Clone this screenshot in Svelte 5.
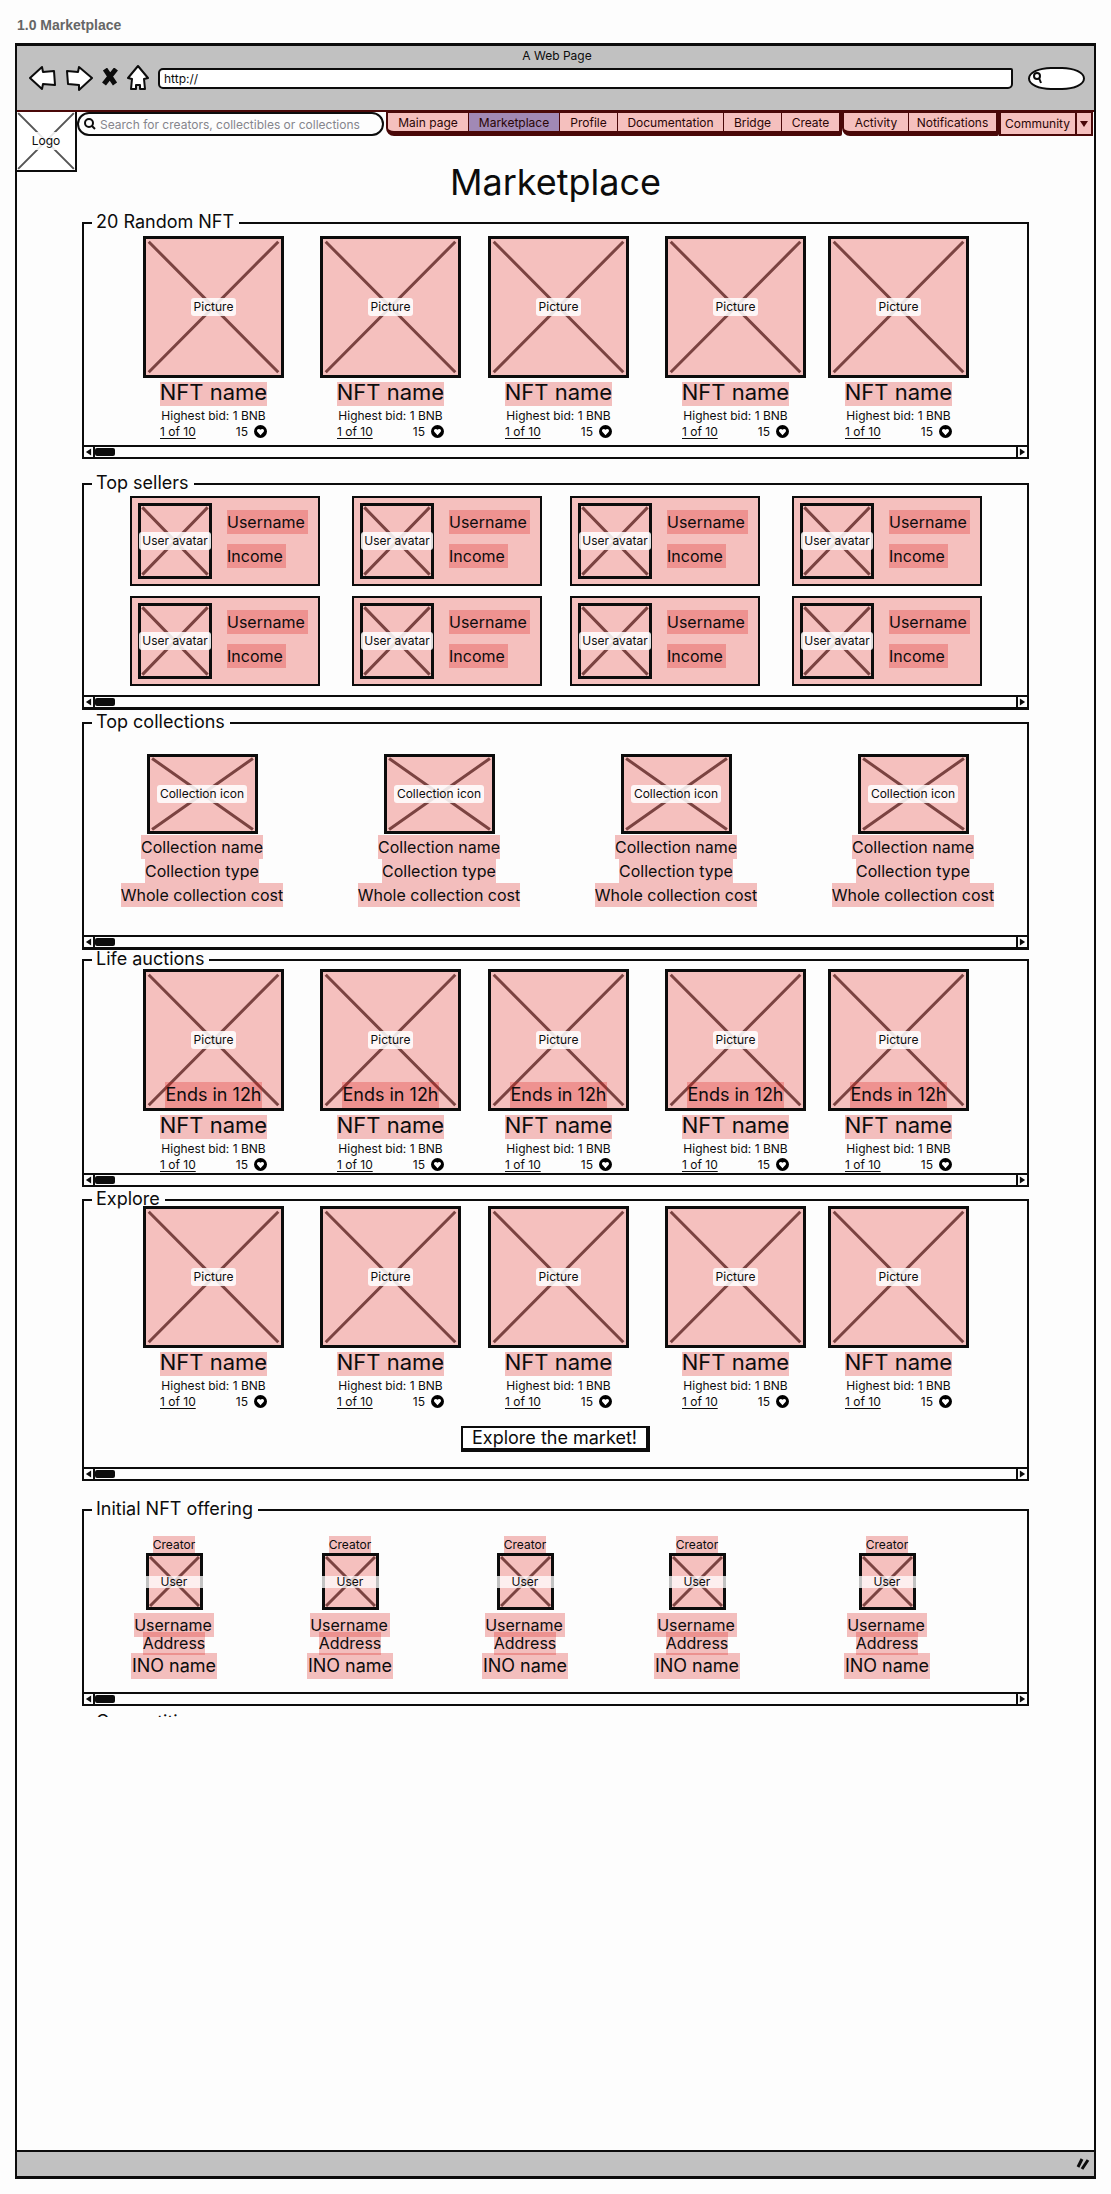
<script>
  const mainLinks = ['Main page', 'Marketplace', 'Profile', 'Documentation', 'Bridge', 'Create'];
  const userLinks = ['Activity', 'Notifications'];
  const five = [1, 2, 3, 4, 5];
  const four = [1, 2, 3, 4];
  const eight = [1, 2, 3, 4, 5, 6, 7, 8];
</script>

{#snippet placeholder(label, kind)}
  <div class="placeholder {kind}">
    <svg viewBox="0 0 100 100" preserveAspectRatio="none" aria-hidden="true">
      <path d="M2 2 98 98M98 2 2 98" vector-effect="non-scaling-stroke" />
    </svg>
    <span>{label}</span>
  </div>
{/snippet}

{#snippet legend(text)}
  <header class="legend"><h2>{text}</h2></header>
{/snippet}

{#snippet scrollbar()}
  <div class="scrollbar">
    <button aria-label="Scroll left"><svg viewBox="0 0 8 8"><path d="M7 0v8L1 4z" /></svg></button>
    <span class="thumb"></span>
    <button class="next" aria-label="Scroll right"><svg viewBox="0 0 8 8"><path d="M1 0v8l6-4z" /></svg></button>
  </div>
{/snippet}

{#snippet nfts(timed)}
  <div class="nfts">
    {#each five as n (n)}
      <article class="nft">
        <div class="cover">
          {@render placeholder('Picture', 'picture')}
          {#if timed}<span class="mark ends">Ends in 12h</span>{/if}
        </div>
        <div class="info">
          <h3 class="mark">NFT name</h3>
          <p>Highest bid: 1 BNB</p>
          <div class="counts">
            <a href="#edition">1 of 10</a>
            <span>15</span>
            <button aria-label="Like">
              <svg viewBox="0 0 13 13">
                <circle cx="6.500" cy="6.500" r="6.500" />
                <path d="M6.500 10.200 3.300 6.700C2 4.800 4.800 2.800 6.500 4.800 8.200 2.800 11 4.800 9.700 6.700z" fill="#fff" />
              </svg>
            </button>
          </div>
        </div>
      </article>
    {/each}
  </div>
{/snippet}

<div class="page">
  <div class="caption">1.0 Marketplace</div>
  <div class="window">
    <div class="chrome">
      <div class="tab-title">A Web Page</div>
      <div class="controls">
        <button aria-label="Back"><svg width="27" height="26" viewBox="0 0 27 26"><path d="M1 13 13 2l1 5 11-1 1 14-12-1-1 5z" /></svg></button>
        <button aria-label="Forward"><svg width="28" height="26" viewBox="0 0 28 26"><path d="M27 13 14 2l-1 5-11-1 1 13 11 1v5z" /></svg></button>
        <button class="stop" aria-label="Stop"><svg width="16" height="20" viewBox="0 0 16 20"><path d="M3 1l10 15M14 1 2 16" /></svg></button>
        <button aria-label="Home"><svg width="22" height="26" viewBox="0 0 22 26"><path d="M11 1 1 13l4 1-1 10h5v-4h4v4h5l-1-10 4-1z" /></svg></button>
        <input class="url" type="text" value="http://" aria-label="Address" />
        <label class="web-search">
          <svg width="10" height="12" viewBox="0 0 10 12"><circle cx="5" cy="4" r="3" /><path d="m7 6 2 5" /></svg>
          <input type="text" aria-label="Web search" />
        </label>
      </div>
    </div>

    <div class="top">
      {@render placeholder('Logo', 'logo')}
      <div class="bar">
        <label class="search">
          <svg width="12" height="12" viewBox="0 0 12 12"><circle cx="5" cy="5" r="4" /><path d="m8 8 3 3" /></svg>
          <input type="text" placeholder="Search for creators, collectibles or collections" aria-label="Search" />
        </label>
        <nav>
          <div class="group main-links">
            {#each mainLinks as link (link)}
              <a href="#nav" class:active={link === 'Marketplace'}>{link}</a>
            {/each}
          </div>
          <div class="group user-links">
            {#each userLinks as link (link)}<a href="#nav">{link}</a>{/each}
          </div>
          <label class="community">
            <select aria-label="Community"><option>Community</option></select>
            <span><svg width="8" height="6" viewBox="0 0 8 6"><path d="M0 0h8L4 6z" /></svg></span>
          </label>
        </nav>
      </div>
      <h1>Marketplace</h1>
    </div>

    <main>
      <section class="random">
        {@render legend('20 Random NFT')}
        <div class="body">
          {@render nfts(false)}
          {@render scrollbar()}
        </div>
      </section>

      <section class="top-sellers">
        {@render legend('Top sellers')}
        <div class="body">
          <div class="sellers">
            {#each eight as n (n)}
              <article class="seller">
                {@render placeholder('User avatar', 'avatar')}
                <div>
                  <span class="mark">Username</span>
                  <span class="mark">Income</span>
                </div>
              </article>
            {/each}
          </div>
          {@render scrollbar()}
        </div>
      </section>

      <section class="top-collections">
        {@render legend('Top collections')}
        <div class="body">
          <div class="collections">
            {#each four as n (n)}
              <article class="collection">
                {@render placeholder('Collection icon', 'icon')}
                <span class="mark">Collection name</span>
                <span class="mark">Collection type</span>
                <span class="mark">Whole collection cost</span>
              </article>
            {/each}
          </div>
          {@render scrollbar()}
        </div>
      </section>

      <section class="auctions">
        {@render legend('Life auctions')}
        <div class="body">
          {@render nfts(true)}
          {@render scrollbar()}
        </div>
      </section>

      <section class="explore">
        {@render legend('Explore')}
        <div class="body">
          {@render nfts(false)}
          <button class="explore-button">Explore the market!</button>
          {@render scrollbar()}
        </div>
      </section>

      <section class="offering">
        {@render legend('Initial NFT offering')}
        <div class="body">
          <div class="creators">
            {#each five as n (n)}
              <article class="creator">
                <span class="mark role">Creator</span>
                {@render placeholder('User', 'user')}
                <span class="mark name">Username</span>
                <span class="mark address">Address</span>
                <span class="mark ino">INO name</span>
              </article>
            {/each}
          </div>
          {@render scrollbar()}
        </div>
      </section>
      <h2 class="cut">Competitions</h2>
    </main>

    <footer>
      <svg width="14" height="14" viewBox="0 0 14 14"><path d="M6 2 2 10M12 3 6 12" /></svg>
    </footer>
  </div>
</div>

<style>
  :global(body) {
    margin: 0;
    background: #fdfdfd;
  }
  .page {
    --ink: #0c0c0c;
    --tint: rgba(219, 30, 26, 0.28);
    --pink: #f5c0be;
    --nav-ink: #4a0808;
    box-sizing: border-box;
    min-height: 100vh;
    padding: 15px 15px 15px;
    display: flex;
    flex-direction: column;
    font: 12px/15px Inter, sans-serif;
    color: var(--ink);
  }
  .page :is(div, span, button, input, label, svg, select, a) {
    box-sizing: border-box;
  }
  h1, h2, h3, p {
    margin: 0;
    font-weight: 400;
  }
  button, input, select {
    margin: 0;
    padding: 0;
    border: 0;
    border-radius: 0;
    background: none;
    font: inherit;
    color: inherit;
    outline: none;
    appearance: none;
  }
  button {
    display: flex;
    align-items: center;
    justify-content: center;
  }
  a {
    color: inherit;
    text-decoration: none;
  }
  svg {
    display: block;
    flex: none;
  }
  .caption {
    padding: 0 2px 8px;
    font: bold 14px/20px "Liberation Sans", Arial, sans-serif;
    color: #666;
  }
  .window {
    flex: 1;
    display: flex;
    flex-direction: column;
    border: solid var(--ink);
    border-width: 3px 2px;
  }

  /* Browser chrome */
  .chrome {
    padding: 2px 9px 18px 12px;
    background: #c1c1c1;
    border-bottom: 2px solid var(--nav-ink);
  }
  .tab-title {
    line-height: 16px;
    text-align: center;
  }
  .controls {
    display: flex;
    align-items: center;
    gap: 9px;
    height: 28px;
  }
  .controls svg {
    fill: #fff;
    stroke: var(--ink);
    stroke-width: 2;
    stroke-linejoin: round;
  }
  .controls .stop svg {
    stroke-width: 5;
  }
  .url {
    flex: 1;
    min-width: 0;
    height: 21px;
    padding: 0 4px;
    border: 2px solid var(--ink);
    border-radius: 5px 2px 5px 5px;
    background: #fff;
  }
  .web-search {
    display: flex;
    align-items: center;
    width: 57px;
    height: 23px;
    margin-left: 6px;
    padding-left: 2px;
    border: 2px solid var(--ink);
    border-radius: 24px / 12px;
    background: #fff;
  }
  .web-search input {
    width: 36px;
  }

  /* Logo, search and navigation */
  .top {
    display: grid;
    grid-template-columns: 60px minmax(0, 1fr);
    grid-template-rows: 24px 82px;
  }
  .bar {
    display: grid;
    grid-template-columns: 307fr 710fr;
  }
  .search {
    display: flex;
    align-items: center;
    gap: 4px;
    min-width: 0;
    height: 24px;
    padding: 0 6px 0 5px;
    border: 2px solid var(--ink);
    border-radius: 12px;
  }
  .search svg {
    fill: none;
    stroke: var(--ink);
    stroke-width: 2;
  }
  .search input {
    flex: 1;
    min-width: 0;
  }
  .search input::placeholder {
    color: #85858c;
    opacity: 1;
  }
  nav {
    min-width: 0;
    display: grid;
    grid-template-columns: 456fr 157fr 95fr;
    padding-left: 2px;
  }
  .group {
    display: grid;
    border: solid var(--nav-ink);
    border-width: 1px 3px 5px 2px;
    border-radius: 0 0 2px 8px;
    background: var(--pink);
  }
  .main-links {
    grid-template-columns: 80fr 91fr 58fr 106fr 58fr 58fr;
  }
  .user-links {
    grid-template-columns: 64fr 88fr;
  }
  .group a {
    display: flex;
    align-items: center;
    justify-content: center;
    padding-top: 1px;
    color: #2a0606;
  }
  .group a + a {
    border-left: 1px solid var(--nav-ink);
  }
  .group .active {
    background: #a189b5;
  }
  .community {
    display: flex;
    margin-right: 1px;
    border: 2px solid var(--nav-ink);
    border-top-width: 1px;
    background: var(--pink);
    color: #2a0606;
  }
  .community select {
    flex: 1;
    min-width: 0;
    padding-left: 4px;
  }
  .community span {
    display: flex;
    align-items: center;
    justify-content: center;
    width: 16px;
    border-left: 2px solid var(--nav-ink);
  }
  .community svg {
    fill: var(--nav-ink);
  }
  h1 {
    margin-right: 60px;
    padding-top: 24px;
    font-size: 36px;
    line-height: 44px;
    text-align: center;
  }

  /* Crossed picture boxes */
  .placeholder {
    position: relative;
    display: flex;
    align-items: center;
    justify-content: center;
    border: 3px solid var(--ink);
    background: var(--pink);
  }
  .placeholder svg {
    position: absolute;
    inset: 0;
    width: 100%;
    height: 100%;
    fill: none;
    stroke: #7b4341;
    stroke-width: 3;
  }
  .placeholder span {
    position: relative;
    padding: 1px 3px;
    border-radius: 3px;
    line-height: 16px;
    white-space: nowrap;
    background: rgba(255, 255, 255, 0.86);
  }
  .logo {
    grid-row: 1 / 3;
    height: 60px;
    border-width: 0 2px 2px 0;
    background: #fff;
  }
  .logo svg {
    stroke: #555;
    stroke-width: 2;
  }
  .picture {
    height: 142px;
  }
  .avatar {
    width: 74px;
    height: 76px;
  }
  .icon {
    width: 111px;
    height: 80px;
    margin-bottom: 1px;
  }
  .user {
    width: 57px;
    height: 57px;
    margin-bottom: 3px;
  }
  .user span {
    flex: none;
    width: 57px;
    padding: 0;
    border-radius: 0;
    line-height: 12px;
    text-align: center;
    background: rgba(255, 255, 255, 0.75);
  }

  /* Titled panels */
  main {
    flex: 1;
    padding: 0 65px 40px;
  }
  .legend {
    display: flex;
    align-items: center;
    height: 6px;
  }
  .legend::before,
  .legend::after {
    content: "";
    align-self: flex-end;
    width: 10px;
    height: 2px;
    background: var(--ink);
  }
  .legend::after {
    flex: 1;
  }
  h2 {
    padding: 2px 5px 0 4px;
    font-size: 18px;
    line-height: 20px;
  }
  .body {
    border: 2px solid var(--ink);
    border-top: 0;
  }
  .random .body { padding-top: 12px; }
  .random .nfts { padding-bottom: 6px; }
  .top-sellers { margin-top: 20px; }
  .top-sellers .body { padding-top: 11px; border-bottom-width: 3px; }
  .top-collections { margin-top: 8px; }
  .top-collections .body { padding-top: 30px; border-bottom-width: 3px; }
  .auctions { margin-top: 5px; }
  .auctions .body { padding-top: 8px; }
  .auctions .nfts { padding-bottom: 1px; }
  .explore { margin-top: 8px; }
  .explore .body { padding-top: 5px; }
  .offering { margin-top: 24px; }
  .offering .body { padding-top: 25px; }
  .cut {
    height: 5px;
    margin-top: 4px;
    padding-left: 14px;
    overflow: hidden;
  }

  .scrollbar {
    display: flex;
    align-items: center;
    height: 12px;
    border-top: 2px solid var(--ink);
  }
  .scrollbar button {
    width: 11px;
    height: 10px;
    border-right: 2px solid var(--ink);
  }
  .scrollbar .next {
    margin-left: auto;
    border-right: 0;
    border-left: 2px solid var(--ink);
  }
  .scrollbar svg {
    width: 7px;
    height: 8px;
    fill: var(--ink);
  }
  .thumb {
    width: 20px;
    height: 8px;
    border-radius: 2px;
    background: var(--ink);
  }

  .mark {
    display: block;
    width: fit-content;
    white-space: nowrap;
    background: var(--tint);
  }

  .nfts {
    display: grid;
    grid-template-columns: 177fr 168fr 177fr 163fr 199fr;
    padding-left: 59px;
  }
  .nft {
    width: 141px;
  }
  .cover {
    position: relative;
  }
  .ends {
    position: absolute;
    right: 0;
    bottom: 3px;
    left: 0;
    margin: 0 auto;
    font-size: 18px;
    line-height: 26px;
  }
  .info {
    display: flex;
    flex-direction: column;
    align-items: center;
    padding-top: 4px;
  }
  .info h3 {
    padding-bottom: 4px;
    font-size: 22px;
    line-height: 20px;
  }
  .info p {
    padding: 2px 0 1px;
    white-space: nowrap;
  }
  .counts {
    display: flex;
    align-items: center;
    gap: 6px;
    width: 107px;
  }
  .counts a {
    margin-right: auto;
    text-decoration: underline;
    text-underline-offset: 2px;
    text-decoration-skip-ink: none;
  }
  .counts svg {
    width: 13px;
    height: 13px;
  }

  .sellers {
    display: grid;
    grid-template-columns: 222fr 218fr 222fr 235fr;
    row-gap: 10px;
    padding: 0 0 9px 46px;
  }
  .seller {
    display: flex;
    align-items: center;
    gap: 15px;
    box-sizing: border-box;
    width: 190px;
    height: 90px;
    padding-left: 6px;
    border: 2px solid var(--ink);
    background: var(--pink);
  }
  .seller > div:last-child {
    display: grid;
    gap: 10px;
    padding-bottom: 4px;
  }
  .seller .mark {
    padding-right: 3px;
    font-size: 16px;
    line-height: 24px;
  }

  .collections {
    display: grid;
    grid-template-columns: 237fr 237fr 237fr 196fr;
    padding: 0 0 28px 36px;
  }
  .collection {
    display: flex;
    flex-direction: column;
    align-items: center;
    width: 164px;
    font-size: 16px;
    line-height: 24px;
  }
  .collection .placeholder {
    font-size: 12px;
  }

  .explore-button {
    height: 26px;
    margin: 17px auto 15px;
    padding: 0 9px;
    border: solid var(--ink);
    border-width: 2px 4px 4px 2px;
    font-size: 18px;
    line-height: 20px;
    background: #fff;
  }

  .creators {
    display: grid;
    grid-template-columns: 176fr 175fr 172fr 190fr 184fr;
    padding: 0 0 13px 46px;
  }
  .creator {
    display: flex;
    flex-direction: column;
    align-items: center;
    width: 88px;
  }
  .role {
    line-height: 17px;
  }
  .name, .address {
    font-size: 16px;
    line-height: 24px;
  }
  .name {
    padding-right: 2px;
  }
  .address {
    margin: -5px 0 -2px;
    line-height: 23px;
  }
  .ino {
    padding: 0 1px;
    font-size: 18px;
    line-height: 26px;
  }

  footer {
    display: flex;
    align-items: center;
    justify-content: flex-end;
    height: 24px;
    padding-right: 4px;
    border-top: 2px solid var(--ink);
    background: #c1c1c1;
  }
  footer svg {
    fill: none;
    stroke: var(--ink);
    stroke-width: 3;
  }
</style>
